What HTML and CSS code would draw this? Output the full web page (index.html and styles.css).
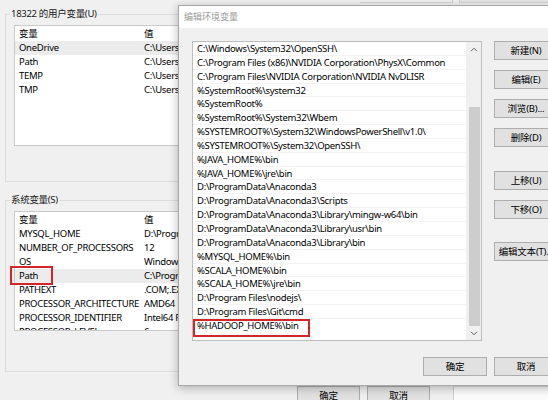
FILE: index.html
```html
<!DOCTYPE html>
<html lang="zh-CN">
<head>
<meta charset="utf-8">
<title>编辑环境变量</title>
<link rel="stylesheet" href="styles.css">
</head>
<body>
<div class="screen">
  <div class="envwin">
    <div class="topstrip"><span class="ts-gap"></span><span class="ts-a"></span><span class="ts-b"></span></div>
    <fieldset class="group g-user">
      <legend>18322 的用户变量(U)</legend>
      <div class="lv lv-user">
        <div class="lv-row lv-head"><span class="c1">变量</span><span class="c2">值</span></div>
        <div class="lv-row sel"><span class="c1">OneDrive</span><span class="c2">C:\Users\18322\OneDrive</span></div>
        <div class="lv-row"><span class="c1">Path</span><span class="c2">C:\Users\18322\AppData\Local</span></div>
        <div class="lv-row"><span class="c1">TEMP</span><span class="c2">C:\Users\18322\AppData\Local\Temp</span></div>
        <div class="lv-row"><span class="c1">TMP</span><span class="c2">C:\Users\18322\AppData\Local\Temp</span></div>
      </div>
    </fieldset>
    <fieldset class="group g-sys">
      <legend>系统变量(S)</legend>
      <div class="lv lv-sys">
        <div class="lv-row lv-head"><span class="c1">变量</span><span class="c2">值</span></div>
        <div class="lv-row"><span class="c1">MYSQL_HOME</span><span class="c2">D:\Program Files\mysql</span></div>
        <div class="lv-row"><span class="c1">NUMBER_OF_PROCESSORS</span><span class="c2">12</span></div>
        <div class="lv-row"><span class="c1">OS</span><span class="c2">Windows_NT</span></div>
        <div class="lv-row sel"><span class="c1">Path</span><span class="c2">C:\Program Files</span></div>
        <div class="lv-row"><span class="c1">PATHEXT</span><span class="c2">.COM;.EXE;.BAT</span></div>
        <div class="lv-row"><span class="c1">PROCESSOR_ARCHITECTURE</span><span class="c2">AMD64</span></div>
        <div class="lv-row"><span class="c1">PROCESSOR_IDENTIFIER</span><span class="c2">Intel64 Family 6</span></div>
        <div class="lv-row"><span class="c1">PROCESSOR_LEVEL</span><span class="c2">6</span></div>
      </div>
    </fieldset>
    <div class="env-actions">
      <button class="btn">确定</button>
      <button class="btn">取消</button>
      <div class="other-win"></div>
    </div>
  </div>

  <div class="annot annot-path"></div>

  <div class="dialog">
    <div class="titlebar">编辑环境变量</div>
    <div class="dlg-body">
      <div class="dlg-main">
        <div class="pathlist">
          <div class="rows">
            <div class="prow">C:\Windows\System32\OpenSSH\</div>
            <div class="prow">C:\Program Files (x86)\NVIDIA Corporation\PhysX\Common</div>
            <div class="prow">C:\Program Files\NVIDIA Corporation\NVIDIA NvDLISR</div>
            <div class="prow">%SystemRoot%\system32</div>
            <div class="prow">%SystemRoot%</div>
            <div class="prow">%SystemRoot%\System32\Wbem</div>
            <div class="prow">%SYSTEMROOT%\System32\WindowsPowerShell\v1.0\</div>
            <div class="prow">%SYSTEMROOT%\System32\OpenSSH\</div>
            <div class="prow">%JAVA_HOME%\bin</div>
            <div class="prow">%JAVA_HOME%\jre\bin</div>
            <div class="prow">D:\ProgramData\Anaconda3</div>
            <div class="prow">D:\ProgramData\Anaconda3\Scripts</div>
            <div class="prow">D:\ProgramData\Anaconda3\Library\mingw-w64\bin</div>
            <div class="prow">D:\ProgramData\Anaconda3\Library\usr\bin</div>
            <div class="prow">D:\ProgramData\Anaconda3\Library\bin</div>
            <div class="prow">%MYSQL_HOME%\bin</div>
            <div class="prow">%SCALA_HOME%\bin</div>
            <div class="prow">%SCALA_HOME%\jre\bin</div>
            <div class="prow">D:\Program Files\nodejs\</div>
            <div class="prow">D:\Program Files\Git\cmd</div>
            <div class="prow last">%HADOOP_HOME%\bin</div>
            <div class="annot annot-hadoop"></div>
          </div>
          <div class="vscroll">
            <div class="sb-arrow"><svg width="8" height="5" viewBox="0 0 8 5"><path d="M1 4.2 L4 1.2 L7 4.2" fill="none" stroke="#606060" stroke-width="1"/></svg></div>
            <div class="sb-track"><div class="sb-thumb"></div></div>
            <div class="sb-arrow"><svg width="8" height="5" viewBox="0 0 8 5"><path d="M1 0.8 L4 3.8 L7 0.8" fill="none" stroke="#606060" stroke-width="1"/></svg></div>
          </div>
        </div>
        <div class="sidebtns">
          <button class="btn">新建(N)</button>
          <button class="btn">编辑(E)</button>
          <button class="btn">浏览(B)...</button>
          <button class="btn">删除(D)</button>
          <button class="btn sep1">上移(U)</button>
          <button class="btn">下移(O)</button>
          <button class="btn sep2">编辑文本(T)...</button>
        </div>
      </div>
      <div class="dlg-footer">
        <button class="btn">确定</button>
        <button class="btn">取消</button>
      </div>
    </div>
  </div>
</div>
</body>
</html>
```

FILE: styles.css
```css
html, body {
  margin: 0;
  padding: 0;
}
body {
  background: #f0f0f0;
  font-family: "Noto Sans", "Noto Sans CJK SC", sans-serif;
  font-size: 9.5px;
  letter-spacing: -0.3px;
  color: #000;
}
.screen {
  position: relative;
  width: 548px;
  height: 400px;
  overflow: hidden;
  background: #f0f0f0;
}

/* underlying environment variables window */
.envwin {
  width: 548px;
}
.topstrip {
  display: flex;
  height: 3px;
}
.ts-gap { width: 360px; }
.ts-a {
  width: 92px;
  border-bottom: 1px solid #d4d4d4;
  border-right: 1px solid #cfcfcf;
}
.ts-b {
  flex: 1;
  margin-left: 6px;
  border-left: 1px solid #cfcfcf;
  border-bottom: 1px solid #d4d4d4;
  background: #e6e6e6;
}
.group {
  margin: 4px 8px 0 5px;
  padding: 0 4px 35px 4px;
  border: 1px solid #dcdcdc;
  min-width: 0;
}
.group legend {
  padding: 0 1px;
  line-height: 14px;
  font-size: 9.5px;
  color: #1a1a1a;
}
.g-sys {
  margin-top: 11px;
  padding-bottom: 40px;
}
.lv {
  margin: 4px 0 0 4px;
  background: #fff;
  border: 1px solid #c9c9c9;
  overflow: hidden;
}
.lv-user { height: 119px; }
.lv-sys { height: 118px; }
.lv-row {
  display: flex;
  height: 14px;
  line-height: 14px;
  white-space: nowrap;
}
.lv-head {
  height: 15px;
  line-height: 15px;
}
.lv-row.sel { background: #ececec; }
.c1 {
  width: 125px;
  padding-left: 4px;
  flex: none;
}
.c2 { flex: 1; }

.env-actions {
  display: flex;
  margin-top: 14px;
  padding-left: 297px;
  gap: 7px;
  height: 20px;
}
.env-actions .btn { width: 63px; }
.other-win {
  flex: 1;
  margin-left: 16px;
  background: #fbfbfb;
  border-left: 1px solid #cfcfcf;
  border-top: 1px solid #dedede;
}

/* buttons */
.btn {
  height: 19px;
  padding: 0;
  margin: 0;
  background: #e1e1e1;
  border: 1px solid #adadad;
  font-family: "Noto Sans", "Noto Sans CJK SC", sans-serif;
  font-size: 9.5px;
  letter-spacing: -0.2px;
  color: #000;
  line-height: 17px;
  white-space: nowrap;
  overflow: visible;
}

/* red annotations */
.annot {
  position: absolute;
  border: 2px solid #d3262b;
  box-sizing: border-box;
}
.annot-path {
  left: 10px;
  top: 266px;
  width: 43px;
  height: 19px;
}

/* edit dialog */
.dialog {
  position: absolute;
  left: 178px;
  top: 5px;
  width: 394px;
  height: 381px;
  box-sizing: border-box;
  background: #f0f0f0;
  border: 1px solid #a8a8a8;
  box-shadow: 0 2px 9px rgba(0, 0, 0, 0.28);
  display: flex;
  flex-direction: column;
}
.titlebar {
  height: 22px;
  line-height: 22px;
  background: #fff;
  padding-left: 5px;
  font-size: 9px;
  letter-spacing: 0;
  color: #9a9a9a;
}
.dlg-body {
  flex: 1;
  display: flex;
  flex-direction: column;
  padding: 13px 13px 9px 13px;
}
.dlg-main {
  display: flex;
  gap: 12px;
}
.pathlist {
  width: 290px;
  height: 300px;
  box-sizing: border-box;
  background: #fff;
  border: 1px solid #bdbdbd;
  display: flex;
}
.rows {
  position: relative;
  flex: 1;
  overflow: hidden;
}
.prow {
  height: 13.85px;
  line-height: 13.85px;
  padding-left: 4px;
  box-sizing: border-box;
  border-bottom: 1px solid #f3f3f3;
  white-space: nowrap;
  color: #000;
}
.prow.last { border-bottom: none; }
.annot-hadoop {
  left: 0;
  top: 277px;
  width: 117px;
  height: 18px;
}
.vscroll {
  width: 15px;
  display: flex;
  flex-direction: column;
  background: #f0f0f0;
}
.sb-arrow {
  height: 14px;
  display: flex;
  align-items: center;
  justify-content: center;
}
.sb-track {
  flex: 1;
  display: flex;
  flex-direction: column;
  padding-top: 51px;
}
.sb-thumb {
  flex: 1;
  margin: 0 1px 0 3px;
  background: #cdcdcd;
}
.sidebtns {
  display: flex;
  flex-direction: column;
  gap: 10px;
  width: 64px;
}
.sidebtns .btn { width: 64px; }
.sidebtns .sep1 { margin-top: 14px; }
.sidebtns .sep2 { margin-top: 13px; }
.dlg-footer {
  display: flex;
  justify-content: flex-end;
  gap: 7px;
  margin-top: 16px;
}
.dlg-footer .btn { width: 64px; }
```
